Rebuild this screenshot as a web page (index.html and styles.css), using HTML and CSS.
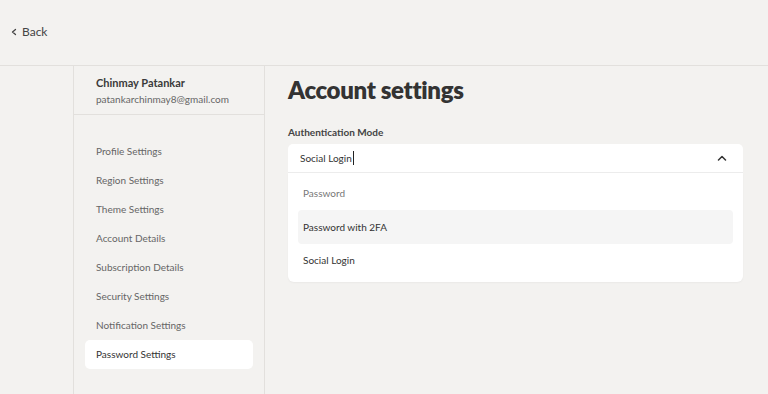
FILE: index.html
```html
<!DOCTYPE html>
<html lang="en">
<head>
<meta charset="UTF-8" />
<meta name="viewport" content="width=device-width, initial-scale=1" />
<title>Account settings</title>
<link rel="stylesheet" href="styles.css">
</head>
<body>

<header class="topbar">
  <a class="back-link" href="#">
    <svg class="back-icon" width="8" height="8" viewBox="0 0 8 8"><path d="M5.5 1.5 L2.5 4 L5.5 6.5" fill="none" stroke="#444" stroke-width="1.3" stroke-linecap="round" stroke-linejoin="round"/></svg>
    Back
  </a>
</header>

<div class="page">
  <div class="gutter"></div>

  <aside class="sidebar">
    <div class="user">
      <div class="user-name">Chinmay Patankar</div>
      <div class="user-email">patankarchinmay8@gmail.com</div>
    </div>
    <nav class="menu">
      <a class="menu-item" href="#">Profile Settings</a>
      <a class="menu-item" href="#">Region Settings</a>
      <a class="menu-item" href="#">Theme Settings</a>
      <a class="menu-item" href="#">Account Details</a>
      <a class="menu-item" href="#">Subscription Details</a>
      <a class="menu-item" href="#">Security Settings</a>
      <a class="menu-item" href="#">Notification Settings</a>
      <a class="menu-item active" href="#">Password Settings</a>
    </nav>
  </aside>

  <main class="content">
    <h1>Account settings</h1>

    <label class="field-label">Authentication Mode</label>
    <div class="select open">
      <div class="select-control">
        <span class="select-value">Social Login</span><span class="caret"></span>
        <svg class="chevron" width="10" height="6" viewBox="0 0 10 6"><path d="M1.5 5 L5 1.5 L8.5 5" fill="none" stroke="#333" stroke-width="1.5" stroke-linecap="round" stroke-linejoin="round"/></svg>
      </div>
      <ul class="options">
        <li class="option muted">Password</li>
        <li class="option hover">Password with 2FA</li>
        <li class="option">Social Login</li>
      </ul>
    </div>
  </main>
</div>

</body>
</html>
```

FILE: styles.css
```css
body {
  margin: 0;
  padding: 0;
  background: #f3f2f0;
  font-family: Lato, 'Open Sans', sans-serif;
  color: #333;
  height: 394px;
  overflow: hidden;
}
a {
  color: inherit;
  text-decoration: none;
}

.topbar {
  border-bottom: 1px solid #e2e0dd;
  display: flex;
  align-items: center;
  padding-left: 10px;
  box-sizing: border-box;
  height: 66px;
}
.back-link {
  display: flex;
  align-items: center;
  gap: 4px;
  font-size: 12px;
  color: #444;
  margin-top: -2px;
}

.page {
  display: flex;
  height: 328px;
}
.gutter {
  width: 73px;
}

.sidebar {
  width: 190px;
  border-left: 1px solid #e2e0dd;
  border-right: 1px solid #e2e0dd;
}
.user {
  padding: 9px 0 10px 22px;
  border-bottom: 1px solid #e2e0dd;
  height: 29px;
}
.user-name {
  font-size: 11px;
  font-weight: 700;
  color: #3a3a3a;
  line-height: 16px;
}
.user-email {
  font-size: 10px;
  color: #666;
  line-height: 17px;
}

.menu {
  display: flex;
  flex-direction: column;
  padding: 22px 11px 0 11px;
}
.menu-item {
  height: 29px;
  line-height: 29px;
  padding-left: 11px;
  font-size: 10px;
  color: #666;
  border-radius: 5px;
}
.menu-item.active {
  background: #fff;
  color: #333;
}

.content {
  flex: 1;
  padding: 0 25px 0 23px;
}
h1 {
  margin: 9px 0 0;
  font-size: 24px;
  font-weight: 800;
  letter-spacing: -0.35px;
  line-height: 30px;
  color: #333;
}
.field-label {
  display: block;
  margin-top: 20px;
  font-size: 10px;
  font-weight: 700;
  color: #444;
  line-height: 14px;
}

.select {
  margin-top: 5px;
}
.select-control {
  height: 28px;
  background: #fff;
  border-radius: 5px 5px 0 0;
  display: flex;
  align-items: center;
  padding: 0 16px 0 12px;
  border-bottom: 1px solid #ececec;
}
.select-value {
  font-size: 10px;
  color: #333;
}
.caret {
  width: 1px;
  height: 14px;
  background: #222;
  margin-left: 1px;
}
.chevron {
  margin-left: auto;
}
.options {
  list-style: none;
  margin: 0;
  padding: 4px 10px 5px;
  background: #fff;
  border-radius: 0 0 6px 6px;
  box-shadow: 0 1px 2px rgba(0,0,0,0.04);
}
.option {
  height: 33px;
  line-height: 33px;
  padding-left: 5px;
  font-size: 10px;
  color: #333;
  border-radius: 4px;
}
.option.muted {
  color: #777;
}
.option.hover {
  background: #f5f5f5;
  height: 34px;
  line-height: 34px;
}
```
